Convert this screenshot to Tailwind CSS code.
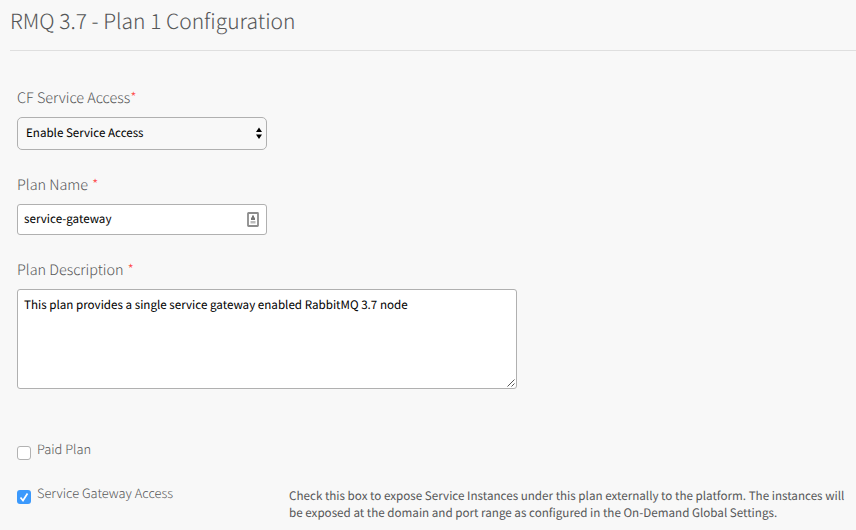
<!DOCTYPE html>
<html lang="en">
<head>
<meta charset="utf-8">
<title>Plan Configuration</title>
<script src="https://cdn.jsdelivr.net/npm/@tailwindcss/browser@4"></script>
</head>
<body class="h-[530px] w-[856px] overflow-hidden bg-[#f8f8f8] font-['Noto_Sans_CJK_SC','Noto_Sans',sans-serif] text-[#555657] [text-rendering:geometricPrecision]">
<main class="flex h-full flex-col">
  <h1 class="ml-[10px] h-[51px] shrink-0 border-b border-[#dfdfdf] text-[21px] leading-[43px] font-light whitespace-nowrap"><span>RMQ 3.7 - Plan 1 Configuration</span></h1>
  <form class="flex flex-col pl-[17px]">
    <div class="mt-[36px] flex h-[30px] text-[14.42px] leading-[21px] font-light"><span>CF Service Access</span><span class="text-[#ff4a4a]">*</span></div>
    <div class="flex h-[33px] w-[250px] items-start justify-between rounded-[5px] border border-[#b0b0b0] pr-[3px] pl-[8px] text-[11.6px] leading-[30px] text-black">
      <span>Enable Service Access</span>
      <svg class="mt-[9px] h-[12px] w-[8px]" viewBox="0 0 8 12"><path d="M4 .5 7 5H1ZM1 7.500h6L4 12Z" fill="#000"/></svg>
    </div>
    <div class="mt-[24px] flex h-[30px] gap-[4px] text-[14.42px] leading-[21px] font-light"><span>Plan Name</span><span class="text-[#ff4a4a]">*</span></div>
    <div class="flex h-[31px] w-[250px] items-start justify-between rounded-[3px] border border-[#b0b0b0] bg-white pr-[7px] pl-[6px] text-[11.64px] leading-[27px] text-black">
      <span>service-gateway</span>
      <svg class="mt-[7px] h-[15px] w-[12px]" viewBox="0 0 12 15"><rect x="1" y="1" width="10" height="13" rx=".5" fill="#fff" stroke="#8c8c8c" stroke-width="1.8"/><path d="M5 3.500h2v2h1V8H4V5.500h1Z" fill="#777"/><path d="M3.500 9h5v2.500h-5Z" fill="#bbb"/></svg>
    </div>
    <div class="mt-[24px] flex h-[30px] gap-[4px] text-[14.42px] leading-[21px] font-light"><span>Plan Description</span><span class="text-[#ff4a4a]">*</span></div>
    <div class="flex h-[100px] w-[500px] items-start justify-between rounded-[3px] border border-[#b0b0b0] bg-white pl-[6px] text-[11.64px] leading-[30px] text-black">
      <span>This plan provides a single service gateway enabled RabbitMQ 3.7 node</span>
      <svg class="mr-[1px] mb-[1px] h-[8px] w-[8px] self-end" viewBox="0 0 8 8"><path d="M.5 7.500 7.500.5M4.500 7.500l3-3" stroke="#555" fill="none"/></svg>
    </div>
    <div class="mt-[49px] flex h-[44px] items-start gap-[6px] text-[12.85px] leading-[22px] font-light">
      <span class="mt-[8px] h-[14px] w-[14px] rounded-[3px] border border-[#b2b2b2] bg-white"></span><span>Paid Plan</span>
    </div>
    <div class="flex items-start">
      <div class="flex w-[272px] shrink-0 items-start gap-[6px] text-[12.85px] leading-[22px] font-light">
        <svg class="mt-[8px] h-[14px] w-[14px]" viewBox="0 0 14 14"><rect width="14" height="14" rx="3" fill="#3b99fc"/><path d="m3.500 7.500 2.500 3L10.500 3.500" fill="none" stroke="#fff" stroke-width="1.7"/></svg><span>Service Gateway Access</span>
      </div>
      <div class="mt-[5px] text-[11.65px] leading-[17px] whitespace-nowrap"><span>Check this box to expose Service Instances under this plan externally to the platform. The instances will</span><br><span>be exposed at the domain and port range as configured in the On-Demand Global Settings.</span></div>
    </div>
  </form>
</main>
</body>
</html>
